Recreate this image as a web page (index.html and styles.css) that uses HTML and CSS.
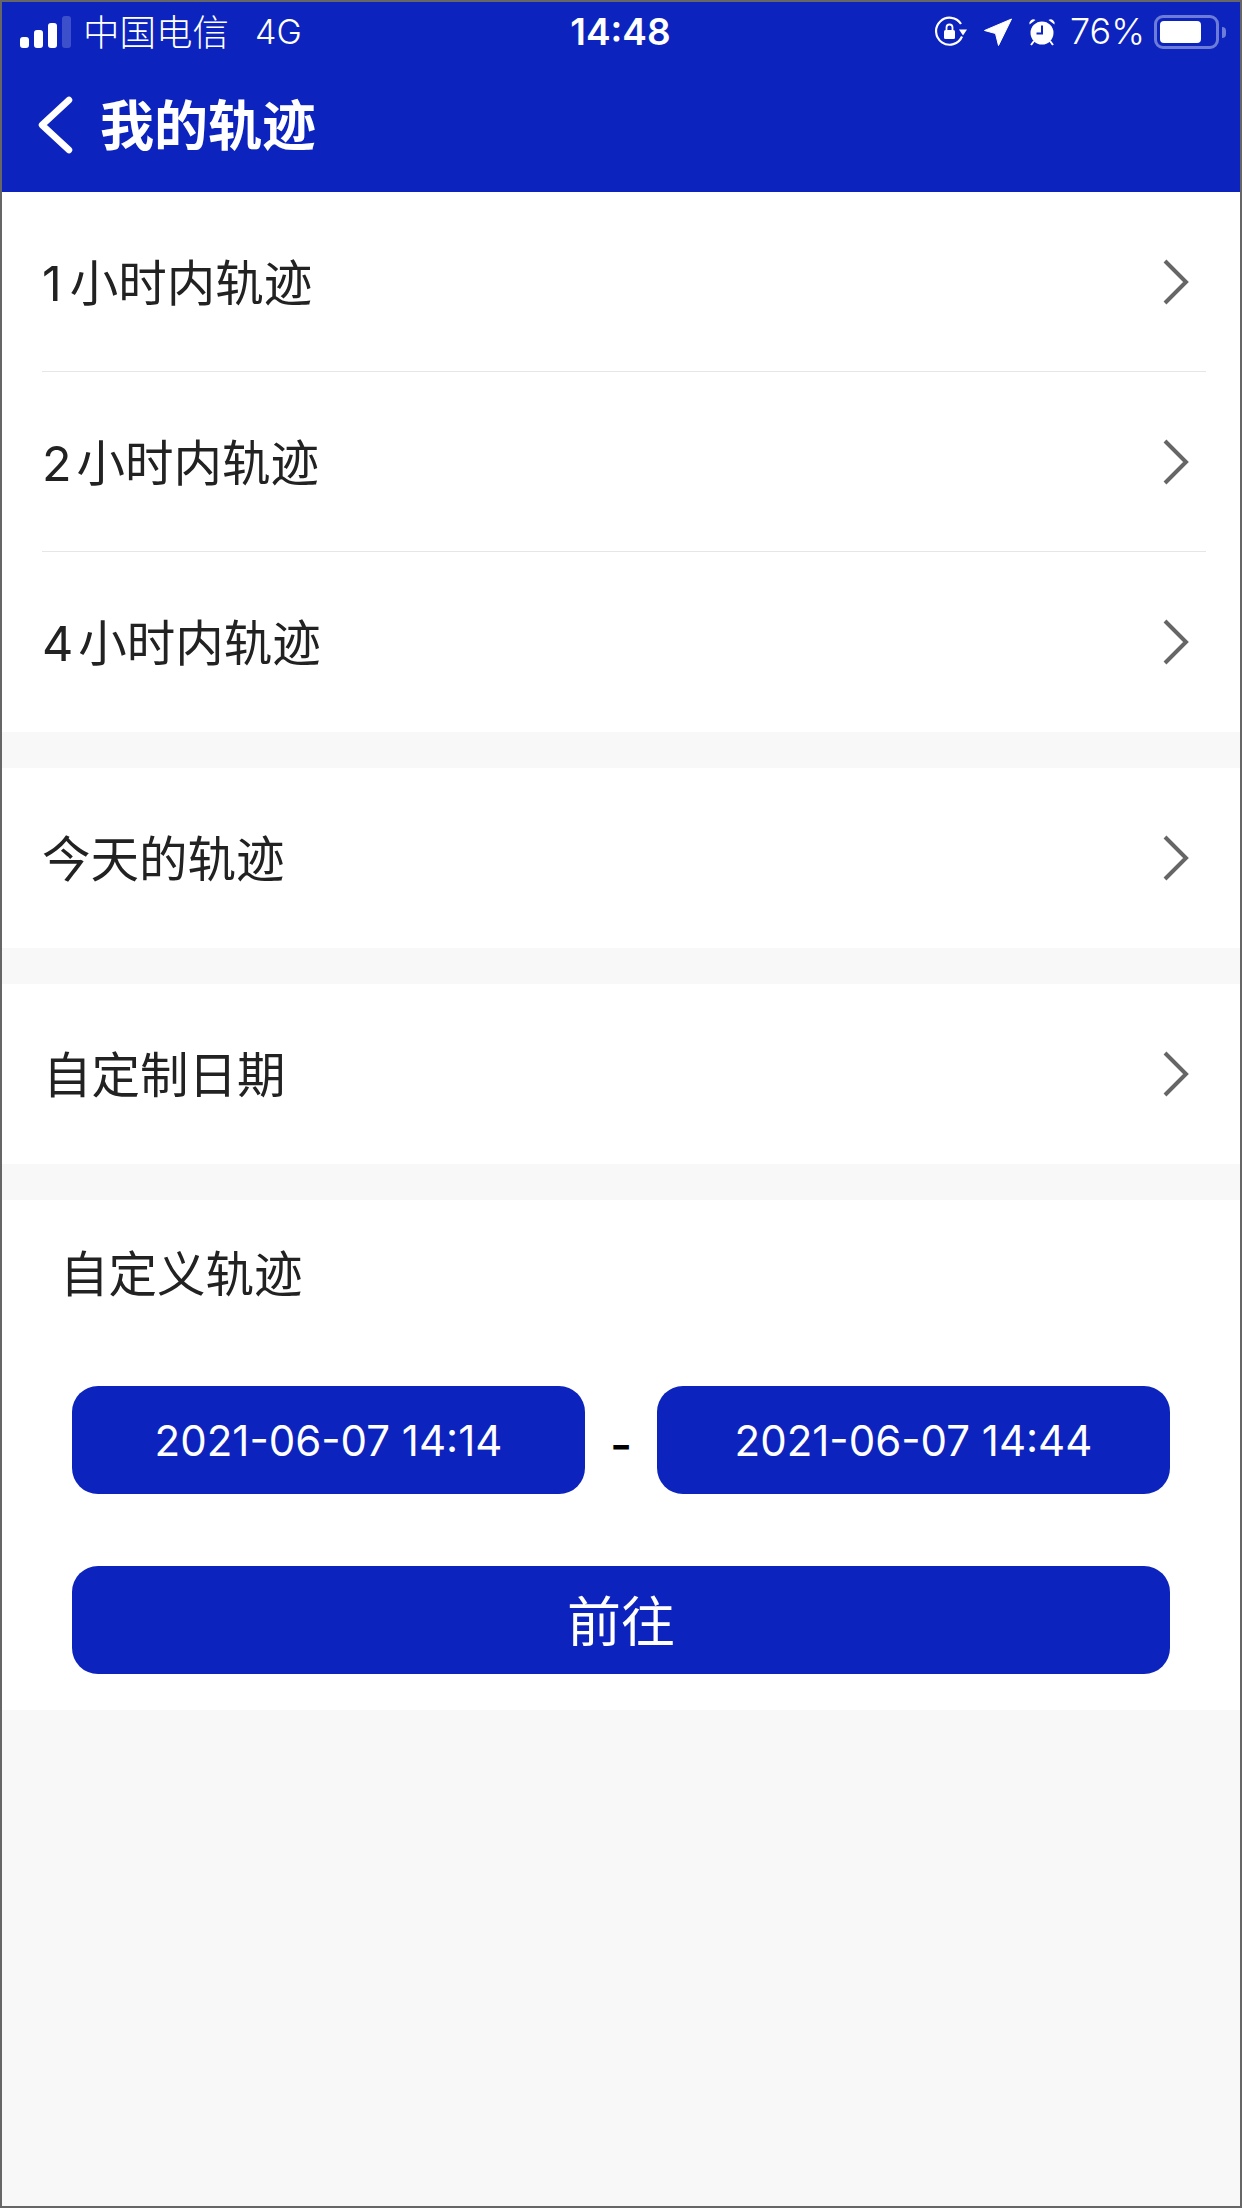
FILE: index.html
```html
<!DOCTYPE html>
<html lang="zh-CN">
<head>
    <meta charset="UTF-8">
    <title>我的轨迹</title>
    <link rel="stylesheet" href="styles.css">
</head>
<body>
    <div class="frame">
        <header class="topbar">
            <div class="status">
                <div class="status-left">
                    <div class="signal">
                        <span class="bar b1"></span>
                        <span class="bar b2"></span>
                        <span class="bar b3"></span>
                        <span class="bar b4"></span>
                    </div>
                    <span class="carrier">中国电信</span>
                    <span class="network">4G</span>
                </div>
                <div class="clock">14:48</div>
                <div class="status-right">
                    <svg class="ico ico-rotate" width="32" height="32" viewBox="0 0 32 32">
                        <path d="M27 20.500A13.500 13.500 0 1 1 26 8" fill="none" stroke="#fff" stroke-width="2.200"/>
                        <path d="M24 13.500h8l-4 6z" fill="#fff"/>
                        <rect x="9" y="14" width="11" height="9" rx="1.500" fill="#fff"/>
                        <path d="M11.500 14v-2.500a3 3 0 0 1 6 0V14" fill="none" stroke="#fff" stroke-width="1.800"/>
                    </svg>
                    <svg class="ico ico-arrow" width="28" height="28" viewBox="0 0 28 28">
                        <path d="M27.500 1L14.500 27.500 11.500 15.500 0.500 12.500z" fill="#fff" stroke="#fff" stroke-linejoin="round"/>
                    </svg>
                    <svg class="ico ico-alarm" width="28" height="30" viewBox="0 0 28 30">
                        <circle cx="14" cy="16" r="11.500" fill="#fff"/>
                        <path d="M14 8.500V16.500H8.500" fill="none" stroke="#0c24bd" stroke-width="2"/>
                        <path d="M1.500 7.500a4 4 0 0 1 6-4.500zM26.500 7.500a4 4 0 0 0-6-4.500z" fill="#fff"/>
                        <path d="M6 24l-3 4M22 24l3 4" stroke="#fff" stroke-width="2"/>
                    </svg>
                    <span class="percent">76%</span>
                    <div class="battery">
                        <div class="battery-body"><div class="battery-level"></div></div>
                        <div class="battery-tip"></div>
                    </div>
                </div>
            </div>
            <div class="nav">
                <svg class="back" width="36" height="58" viewBox="0 0 36 58">
                    <path d="M32 4L5 29l27 25" fill="none" stroke="#fff" stroke-width="6.500" stroke-linecap="round" stroke-linejoin="round"/>
                </svg>
                <h1 class="nav-title">我的轨迹</h1>
            </div>
        </header>

        <section class="group">
            <div class="row line"><span class="row-label"><span class="num one">1</span>小时内轨迹</span><svg class="arrow" width="28" height="46" viewBox="0 0 28 46"><path d="M3 2l21 21L3 44" fill="none" stroke="#666" stroke-width="4"/></svg></div>
            <div class="row line"><span class="row-label"><span class="num">2</span>小时内轨迹</span><svg class="arrow" width="28" height="46" viewBox="0 0 28 46"><path d="M3 2l21 21L3 44" fill="none" stroke="#666" stroke-width="4"/></svg></div>
            <div class="row"><span class="row-label"><span class="num">4</span>小时内轨迹</span><svg class="arrow" width="28" height="46" viewBox="0 0 28 46"><path d="M3 2l21 21L3 44" fill="none" stroke="#666" stroke-width="4"/></svg></div>
        </section>

        <section class="group">
            <div class="row"><span class="row-label">今天的轨迹</span><svg class="arrow" width="28" height="46" viewBox="0 0 28 46"><path d="M3 2l21 21L3 44" fill="none" stroke="#666" stroke-width="4"/></svg></div>
        </section>

        <section class="group">
            <div class="row"><span class="row-label indent">自定制日期</span><svg class="arrow" width="28" height="46" viewBox="0 0 28 46"><path d="M3 2l21 21L3 44" fill="none" stroke="#666" stroke-width="4"/></svg></div>
        </section>

        <section class="group custom">
            <h2 class="custom-title">自定义轨迹</h2>
            <div class="range">
                <button class="btn date">2021-06-07 14:14</button>
                <span class="dash">-</span>
                <button class="btn date">2021-06-07 14:44</button>
            </div>
            <button class="btn go"><span class="go-label">前往</span></button>
        </section>
    </div>
</body>
</html>
```

FILE: styles.css
```css
* {
    box-sizing: border-box;
}

body {
    margin: 0;
    font-family: Inter, "Noto Sans CJK SC", sans-serif;
}

.frame {
    width: 1242px;
    height: 2208px;
    border: 2px solid #666;
    background-color: #f8f8f8;
    overflow: hidden;
}

.topbar {
    height: 190px;
    background-color: #0c24bd;
    color: white;
}

.status {
    height: 60px;
    padding: 0 14px 0 18px;
    display: grid;
    grid-template-columns: 1fr auto 1fr;
    align-items: center;
}

.status-left,
.status-right {
    display: flex;
    align-items: center;
}

.status-right {
    justify-content: flex-end;
}

.signal {
    display: flex;
    align-items: flex-end;
    gap: 5px;
    height: 32px;
    margin-right: 12px;
}

.bar {
    width: 9px;
    background: white;
    border-radius: 3px;
}

.b1 { height: 11px; }
.b2 { height: 18px; }
.b3 { height: 25px; }
.b4 { height: 32px; background: #3d50cb; }

.carrier {
    font-size: 36.500px;
    font-weight: 300;
    margin-right: 26px;
    padding-bottom: 4px;
}

.network {
    font-size: 34px;
    font-weight: 300;
    padding-bottom: 2px;
}

.clock {
    font-size: 37px;
    font-weight: 600;
    padding-bottom: 2px;
    margin-right: 5px;
}

.ico-rotate { margin-right: 17px; }
.ico-arrow { margin-right: 16px; }
.ico-alarm { margin-right: 14px; }

.percent {
    font-size: 36px;
    font-weight: 300;
    margin-right: 9px;
    padding-bottom: 3px;
}

.battery {
    display: flex;
    align-items: center;
}

.battery-body {
    width: 65px;
    height: 34px;
    border: 3px solid #6d7cd8;
    border-radius: 9px;
    padding: 3px;
}

.battery-level {
    width: 41px;
    height: 22px;
    background: white;
    border-radius: 4px;
}

.battery-tip {
    width: 4px;
    height: 11px;
    margin-left: 3px;
    background: #6d7cd8;
    border-radius: 0 4px 4px 0;
}

.nav {
    height: 130px;
    padding-left: 35px;
    padding-bottom: 4px;
    display: flex;
    align-items: center;
}

.back {
    margin-right: 27px;
}

.nav-title {
    margin: 0;
    padding-bottom: 6px;
    font-size: 54px;
    font-weight: bold;
}

.group {
    background: white;
    margin-bottom: 36px;
}

.row {
    height: 180px;
    margin-left: 40px;
    margin-right: 34px;
    padding-right: 16px;
    display: flex;
    align-items: center;
    justify-content: space-between;
}

.line {
    border-bottom: 1px solid #e6e6e6;
}

.row-label {
    padding-bottom: 4px;
    font-size: 48.500px;
    color: #222;
}

.num {
    margin-right: 5px;
}

.one {
    margin-right: 8px;
}

.indent {
    margin-left: 1px;
}

.custom {
    height: 510px;
    padding: 46px 70px 0 70px;
}

.custom-title {
    margin: 0 0 0 -12px;
    font-size: 48.500px;
    font-weight: normal;
    line-height: 58px;
    color: #222;
}

.range {
    display: flex;
    justify-content: space-between;
    align-items: center;
    margin-top: 82px;
}

.btn {
    height: 108px;
    border: none;
    border-radius: 26px;
    background-color: #0c24bd;
    color: white;
    padding: 0;
    font-family: inherit;
}

.date {
    width: 513px;
    font-size: 42px;
    font-weight: 400;
}

.dash {
    font-size: 48px;
    font-weight: 500;
    padding-top: 8px;
    color: black;
}

.go {
    display: block;
    width: 1098px;
    margin-top: 72px;
    font-size: 54px;
}

.go-label {
    display: block;
    margin-bottom: 4px;
}
```
